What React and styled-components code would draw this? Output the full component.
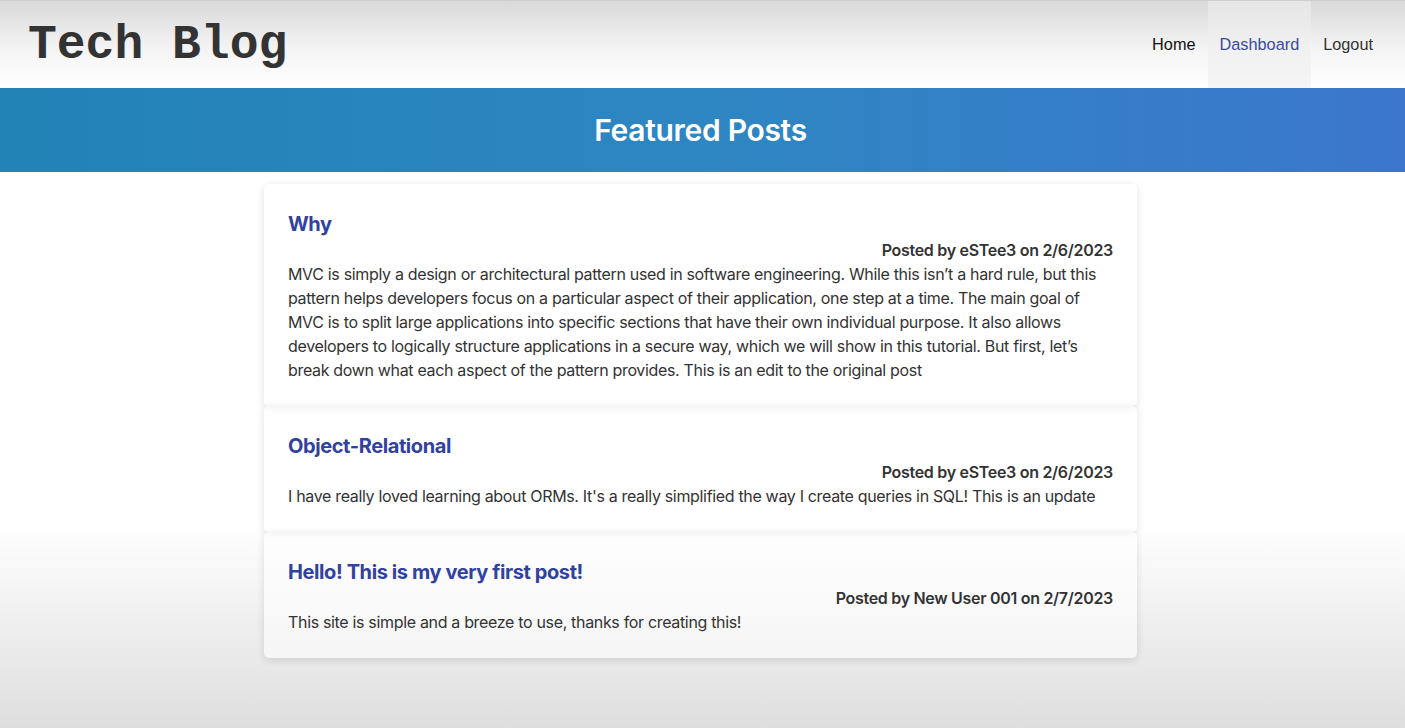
import React from 'react';
import styled, { createGlobalStyle } from 'styled-components';

const GlobalStyle = createGlobalStyle`
  html, body {
    margin: 0;
    padding: 0;
  }

  body {
    font-family: Inter, "Noto Sans", Arial, sans-serif;
    color: #333;
  }
`;

const Page = styled.div`
  min-height: 100vh;
  background: linear-gradient(180deg, #fff 0%, #fff 72%, #dedede 100%);
`;

const Header = styled.header`
  height: 88px;
  display: flex;
  align-items: center;
  justify-content: space-between;
  padding: 0 20px 0 28px;
  background: linear-gradient(180deg, #d9d9d9 0%, #f4f4f4 55%, #fff 100%);
  border-top: 1px solid #cfcfcf;
  box-sizing: border-box;
`;

const Logo = styled.h1`
  margin: 0;
  font-family: "Liberation Mono", "Courier New", monospace;
  font-weight: 700;
  font-size: 48px;
  color: #333;
`;

const Nav = styled.nav`
  display: flex;
  align-self: stretch;
`;

const NavLink = styled.a`
  display: flex;
  align-items: center;
  padding: 0 12px;
  font-family: "Liberation Sans", Arial, sans-serif;
  font-size: 16.3px;
  color: ${(p) => (p.$active ? '#3a4aa0' : p.$dark ? '#111' : '#333')};
  background: ${(p) => (p.$active ? 'rgba(239, 239, 239, 0.6)' : 'transparent')};
  text-decoration: none;
  cursor: pointer;
`;

const Banner = styled.div`
  height: 84px;
  display: flex;
  align-items: center;
  justify-content: center;
  padding-right: 4px;
  background: linear-gradient(90deg, #2283b7 0%, #2e86c2 50%, #3c77cd 100%);
`;

const BannerTitle = styled.h2`
  margin: 0;
  color: #fff;
  font-size: 30px;
  font-weight: 600;
  letter-spacing: -0.3px;
`;

const Main = styled.main`
  padding: 12px 4px 0 0;
`;

const Feed = styled.div`
  width: 873px;
  margin: 0 auto;
`;

const Card = styled.article`
  background: rgba(255, 255, 255, 0.55);
  border-radius: 5px;
  box-shadow: 0 2px 8px rgba(0, 0, 0, 0.12);
  padding: 24px;
`;

const PostTitle = styled.h3`
  margin: 0;
  font-size: 20px;
  line-height: 32px;
  font-weight: 700;
  letter-spacing: -0.4px;
  color: #3141a0;
`;

const Meta = styled.div`
  text-align: right;
  font-size: 16px;
  line-height: 20px;
  font-weight: 600;
  letter-spacing: -0.3px;
  color: #333;
  margin-bottom: 2px;
`;

const Body = styled.p`
  margin: 0;
  font-size: 16px;
  line-height: 24px;
  letter-spacing: -0.33px;
  color: #333;
`;

const posts = [
  {
    title: 'Why',
    author: 'eSTee3',
    date: '2/6/2023',
    body:
      'MVC is simply a design or architectural pattern used in software engineering. While this isn\u2019t a hard rule, but this pattern helps developers focus on a particular aspect of their application, one step at a time. The main goal of MVC is to split large applications into specific sections that have their own individual purpose. It also allows developers to logically structure applications in a secure way, which we will show in this tutorial. But first, let\u2019s break down what each aspect of the pattern provides. This is an edit to the original post',
  },
  {
    title: 'Object-Relational',
    author: 'eSTee3',
    date: '2/6/2023',
    body:
      "I have really loved learning about ORMs. It's a really simplified the way I create queries in SQL! This is an update",
  },
  {
    title: 'Hello! This is my very first post!',
    author: 'New User 001',
    date: '2/7/2023',
    body: 'This site is simple and a breeze to use, thanks for creating this!',
  },
];

const App = () => (
  <Page>
    <GlobalStyle />
    <Header>
      <Logo>Tech Blog</Logo>
      <Nav>
        <NavLink $dark>Home</NavLink>
        <NavLink $active>Dashboard</NavLink>
        <NavLink>Logout</NavLink>
      </Nav>
    </Header>

    <Banner>
      <BannerTitle>Featured Posts</BannerTitle>
    </Banner>

    <Main>
      <Feed>
        {posts.map((post) => (
          <Card key={post.title}>
            <PostTitle>{post.title}</PostTitle>
            <Meta>
              Posted by {post.author} on {post.date}
            </Meta>
            <Body>{post.body}</Body>
          </Card>
        ))}
      </Feed>
    </Main>
  </Page>
);

export default App;
